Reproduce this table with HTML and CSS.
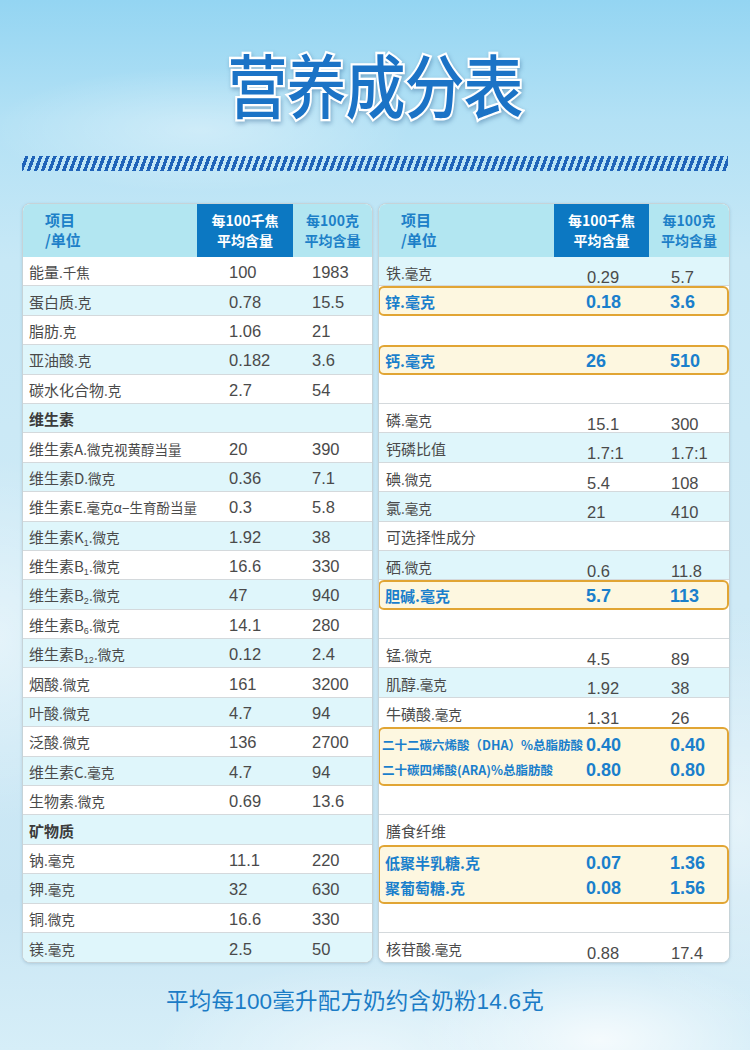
FILE: index.html
```html
<!DOCTYPE html>
<html lang="zh">
<head>
<meta charset="utf-8">
<title>营养成分表</title>
<link rel="stylesheet" href="styles.css">
</head>
<body>
<div class="page">
  <h1 class="title">营养成分表</h1>
  <div class="stripes"></div>
  <div class="tables">
    <div class="tbl">
      <div class="head">
        <div class="hname">项目<br>/单位</div>
        <div class="hdark">每100千焦<br>平均含量</div>
        <div class="hlight">每100克<br>平均含量</div>
      </div>
      <div class="row w"><div class="n">能量<span class="u">.千焦</span></div><div class="v1">100</div><div class="v2">1983</div></div>
      <div class="row c"><div class="n">蛋白质<span class="u">.克</span></div><div class="v1">0.78</div><div class="v2">15.5</div></div>
      <div class="row w"><div class="n">脂肪<span class="u">.克</span></div><div class="v1">1.06</div><div class="v2">21</div></div>
      <div class="row c"><div class="n">亚油酸<span class="u">.克</span></div><div class="v1">0.182</div><div class="v2">3.6</div></div>
      <div class="row w"><div class="n">碳水化合物<span class="u">.克</span></div><div class="v1">2.7</div><div class="v2">54</div></div>
      <div class="row c"><div class="n sec">维生素</div></div>
      <div class="row w"><div class="n">维生素A<span class="u">.微克视黄醇当量</span></div><div class="v1">20</div><div class="v2">390</div></div>
      <div class="row c"><div class="n">维生素D<span class="u">.微克</span></div><div class="v1">0.36</div><div class="v2">7.1</div></div>
      <div class="row w"><div class="n">维生素E<span class="u">.毫克α−生育酚当量</span></div><div class="v1">0.3</div><div class="v2">5.8</div></div>
      <div class="row c"><div class="n">维生素K<sub>1</sub><span class="u">.微克</span></div><div class="v1">1.92</div><div class="v2">38</div></div>
      <div class="row w"><div class="n">维生素B<sub>1</sub><span class="u">.微克</span></div><div class="v1">16.6</div><div class="v2">330</div></div>
      <div class="row c"><div class="n">维生素B<sub>2</sub><span class="u">.微克</span></div><div class="v1">47</div><div class="v2">940</div></div>
      <div class="row w"><div class="n">维生素B<sub>6</sub><span class="u">.微克</span></div><div class="v1">14.1</div><div class="v2">280</div></div>
      <div class="row c"><div class="n">维生素B<sub>12</sub><span class="u">.微克</span></div><div class="v1">0.12</div><div class="v2">2.4</div></div>
      <div class="row w"><div class="n">烟酸<span class="u">.微克</span></div><div class="v1">161</div><div class="v2">3200</div></div>
      <div class="row c"><div class="n">叶酸<span class="u">.微克</span></div><div class="v1">4.7</div><div class="v2">94</div></div>
      <div class="row w"><div class="n">泛酸<span class="u">.微克</span></div><div class="v1">136</div><div class="v2">2700</div></div>
      <div class="row c"><div class="n">维生素C<span class="u">.毫克</span></div><div class="v1">4.7</div><div class="v2">94</div></div>
      <div class="row w"><div class="n">生物素<span class="u">.微克</span></div><div class="v1">0.69</div><div class="v2">13.6</div></div>
      <div class="row c"><div class="n sec">矿物质</div></div>
      <div class="row w"><div class="n">钠<span class="u">.毫克</span></div><div class="v1">11.1</div><div class="v2">220</div></div>
      <div class="row c"><div class="n">钾<span class="u">.毫克</span></div><div class="v1">32</div><div class="v2">630</div></div>
      <div class="row w"><div class="n">铜<span class="u">.微克</span></div><div class="v1">16.6</div><div class="v2">330</div></div>
      <div class="row c last"><div class="n">镁<span class="u">.毫克</span></div><div class="v1">2.5</div><div class="v2">50</div></div>
    </div>

    <div class="tbl right">
      <div class="head">
        <div class="hname">项目<br>/单位</div>
        <div class="hdark">每100千焦<br>平均含量</div>
        <div class="hlight">每100克<br>平均含量</div>
      </div>
      <div class="row c"><div class="n">铁<span class="u">.毫克</span></div><div class="v1 lo">0.29</div><div class="v2 lo">5.7</div></div>
      <div class="hl one">
        <div class="hrow"><div class="n">锌.毫克</div><div class="v1">0.18</div><div class="v2">3.6</div></div>
      </div>
      <div class="row w nob"></div>
      <div class="hl one">
        <div class="hrow"><div class="n">钙.毫克</div><div class="v1">26</div><div class="v2">510</div></div>
      </div>
      <div class="row w"></div>
      <div class="row w"><div class="n">磷<span class="u">.毫克</span></div><div class="v1 lo">15.1</div><div class="v2 lo">300</div></div>
      <div class="row c"><div class="n">钙磷比值</div><div class="v1 lo">1.7:1</div><div class="v2 lo">1.7:1</div></div>
      <div class="row w"><div class="n">碘<span class="u">.微克</span></div><div class="v1 lo">5.4</div><div class="v2 lo">108</div></div>
      <div class="row c"><div class="n">氯<span class="u">.毫克</span></div><div class="v1 lo">21</div><div class="v2 lo">410</div></div>
      <div class="row w"><div class="n">可选择性成分</div></div>
      <div class="row c"><div class="n">硒<span class="u">.微克</span></div><div class="v1 lo">0.6</div><div class="v2 lo">11.8</div></div>
      <div class="hl one">
        <div class="hrow"><div class="n">胆碱.毫克</div><div class="v1">5.7</div><div class="v2">113</div></div>
      </div>
      <div class="row w"></div>
      <div class="row w"><div class="n">锰<span class="u">.微克</span></div><div class="v1 lo">4.5</div><div class="v2 lo">89</div></div>
      <div class="row c"><div class="n">肌醇<span class="u">.毫克</span></div><div class="v1 lo">1.92</div><div class="v2 lo">38</div></div>
      <div class="row w nob"><div class="n">牛磺酸<span class="u">.毫克</span></div><div class="v1 lo">1.31</div><div class="v2 lo">26</div></div>
      <div class="hl two">
        <div class="hrow sm"><div class="n">二十二碳六烯酸（DHA）%总脂肪酸</div><div class="v1">0.40</div><div class="v2">0.40</div></div>
        <div class="hrow sm"><div class="n">二十碳四烯酸(ARA)%总脂肪酸</div><div class="v1">0.80</div><div class="v2">0.80</div></div>
      </div>
      <div class="row w"></div>
      <div class="row w nob"><div class="n">膳食纤维</div></div>
      <div class="hl two">
        <div class="hrow"><div class="n">低聚半乳糖.克</div><div class="v1">0.07</div><div class="v2">1.36</div></div>
        <div class="hrow"><div class="n">聚葡萄糖.克</div><div class="v1">0.08</div><div class="v2">1.56</div></div>
      </div>
      <div class="row w"></div>
      <div class="row w last"><div class="n">核苷酸<span class="u">.毫克</span></div><div class="v1 lo">0.88</div><div class="v2 lo">17.4</div></div>
    </div>
  </div>
  <p class="note">平均每100毫升配方奶约含奶粉14.6克</p>
</div>
</body>
</html>
```

FILE: styles.css
```css
* { box-sizing: border-box; }
html, body { margin: 0; padding: 0; }
body {
  width: 750px;
  height: 1050px;
  overflow: hidden;
  font-family: "Liberation Sans", "Noto Sans CJK SC", sans-serif;
  background:
    radial-gradient(ellipse 260px 120px at 600px 1040px, rgba(255,255,255,0.75), rgba(255,255,255,0) 70%),
    radial-gradient(ellipse 300px 140px at 360px 1060px, rgba(255,255,255,0.5), rgba(255,255,255,0) 70%),
    radial-gradient(ellipse 200px 300px at 740px 820px, rgba(255,255,255,0.5), rgba(255,255,255,0) 70%),
    radial-gradient(ellipse 160px 260px at 0px 640px, rgba(255,255,255,0.45), rgba(255,255,255,0) 70%),
    radial-gradient(ellipse 300px 90px at 200px 130px, rgba(255,255,255,0.35), rgba(255,255,255,0) 70%),
    linear-gradient(180deg, #94d5f2 0px, #b3e1f5 120px, #c7e8f6 260px, #cfeaf6 600px, #c9e6f4 900px, #d6eef8 1050px);
}
.page {
  padding-top: 44px;
}
.title {
  margin: 0;
  height: 88px;
  text-align: center;
  font-family: "Noto Sans CJK SC", sans-serif;
  font-weight: 500;
  font-size: 60px;
  line-height: 80px;
  letter-spacing: -1px;
  color: #1b73c6;
  -webkit-text-stroke: 4px #ffffff;
  paint-order: stroke fill;
  transform: scaleY(1.15);
  filter: drop-shadow(1px 2px 2px rgba(40, 90, 140, 0.4));
}
.stripes {
  margin: 24px 22px 0 22px;
  height: 15px;
  background: repeating-linear-gradient(-70deg, transparent 0px, transparent 2.3px, #1f63b8 2.3px, #1f63b8 5.6px, transparent 5.6px, transparent 6.6px);
}
.tables {
  margin: 32px 20px 0 22px;
  display: grid;
  grid-template-columns: 351px 352px;
  column-gap: 5px;
}
.tbl {
  border: 1px solid #c6d3d8;
  border-radius: 8px;
  overflow: hidden;
  background: #ffffff;
  box-shadow: 0 1px 3px rgba(80, 120, 150, 0.25);
}
.head {
  display: grid;
  grid-template-columns: 174px 96px 1fr;
  height: 53px;
  background: #b2e6f1;
  font-family: "Noto Sans CJK SC", sans-serif;
  font-weight: 700;
  font-size: 14px;
  line-height: 20px;
}
.right .head { grid-template-columns: 175px 95px 1fr; }
.hname {
  color: #1d80c8;
  padding: 6px 0 0 22px;
  font-size: 15px;
}
.hdark {
  background: #0c78c2;
  color: #ffffff;
  text-align: center;
  padding-top: 6px;
}
.hlight {
  color: #1d80c8;
  text-align: center;
  padding-top: 6px;
}
.row, .hrow {
  display: grid;
  grid-template-columns: 174px 96px 1fr;
  height: 29.4px;
  align-items: center;
  color: #4a4a4a;
}
.right .row, .right .hrow { grid-template-columns: 175px 95px 1fr; }
.row { border-bottom: 1px solid #d4d9dc; }
.row.nob { border-bottom: none; }
.row.last { border-bottom: none; }
.row.w { background: #ffffff; }
.row.c { background: #dff6fb; }
.n {
  padding-left: 6px;
  font-size: 15px;
  white-space: nowrap;
  font-family: "Noto Sans CJK SC", sans-serif;
  line-height: 20px;
  padding-top: 2px;
}
.right .n { padding-left: 7px; }
.n .u { font-size: 13.5px; }
.n sub { font-size: 9px; vertical-align: -3px; line-height: 0; font-family: "Liberation Sans", sans-serif; }
.n.sec { font-weight: 700; color: #3c3c3c; }
.v1, .v2 {
  font-size: 16.5px;
  line-height: 20px;
  padding-top: 2px;
}
.v1 { padding-left: 32px; }
.v2 { padding-left: 19px; }
.right .v1 { padding-left: 33px; }
.right .v2 { padding-left: 22px; }
.lo { padding-top: 10px; }
.hl {
  background: #fdf7e0;
  border: 2px solid #e1a534;
  border-radius: 6px;
  margin: 0 0 0 -1px;
  display: flex;
  flex-direction: column;
  justify-content: center;
}
.hl.one { height: 29.4px; }
.hl.two { height: 58.8px; }
.hl .hrow {
  color: #1a7fcc;
  font-weight: 700;
  height: 25px;
  margin-left: -2px;
  margin-right: -2px;
}
.hl.one .hrow { height: 25.4px; }
.hl .n { padding-left: 7px; font-weight: 700; }
.hl .hrow.sm .n { font-size: 12.5px; padding-left: 4px; overflow: visible; }
.hl .v1, .hl .v2 { font-size: 18px; font-weight: 700; }
.note {
  margin: 20px 40px 0 0;
  text-align: center;
  font-family: "Liberation Sans", "Noto Sans CJK SC", sans-serif;
  font-size: 22.5px;
  color: #1b7cc6;
  letter-spacing: 0.2px;
}
```
